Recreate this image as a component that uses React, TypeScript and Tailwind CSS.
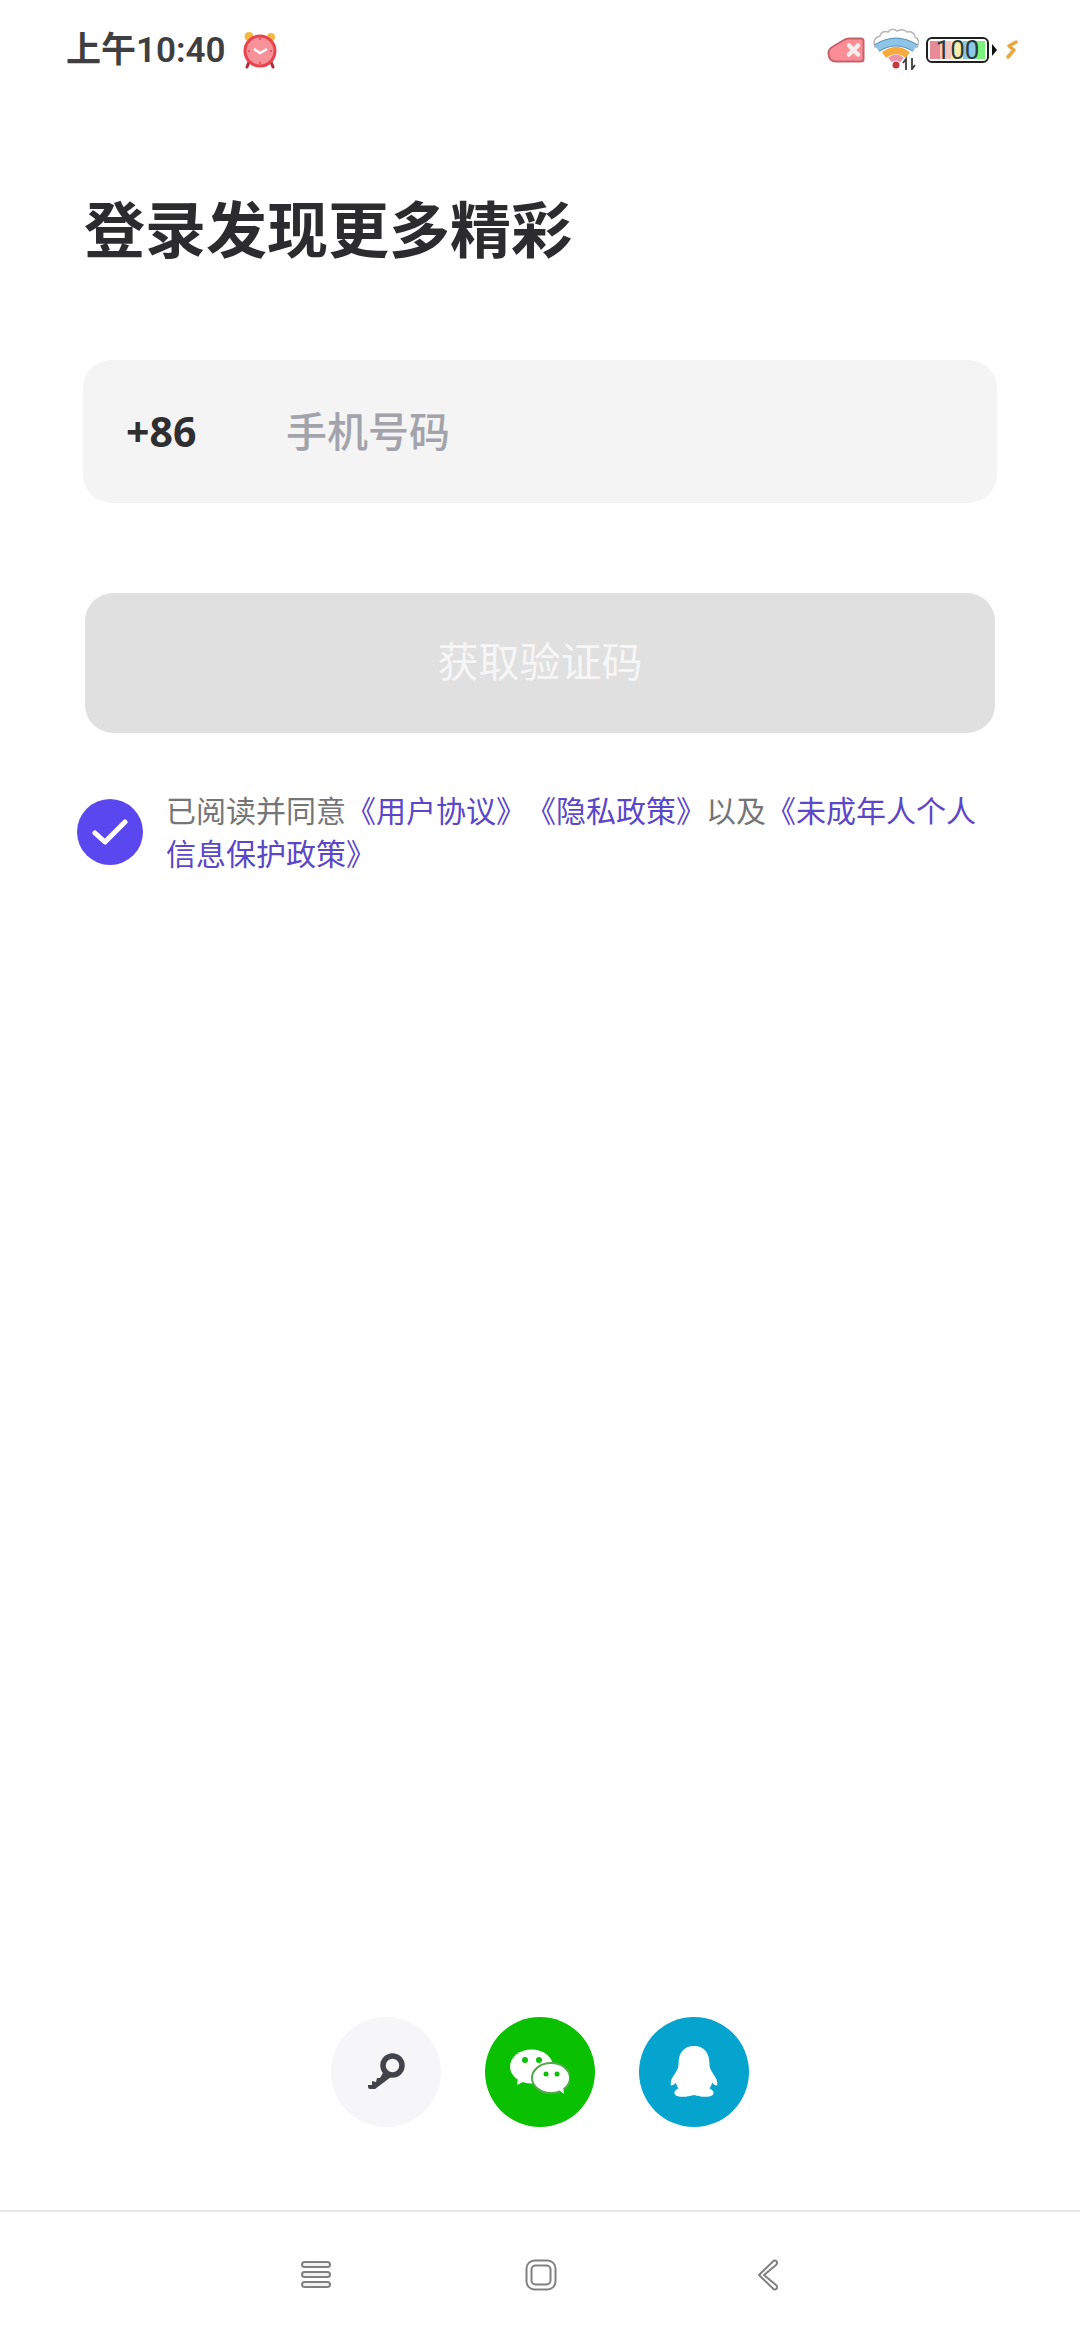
const CJK = "font-['Roboto','Noto_Sans_CJK_SC',sans-serif]";

const AlarmIcon = () => (
  <svg width="34" height="38" viewBox="0 0 34 38">
    <circle cx="6" cy="5.500" r="4.500" fill="#f5b942" />
    <circle cx="28" cy="6" r="4" fill="#f5b942" />
    <path d="M6 31 L4 36 M28 31 L30 36" stroke="#b3283a" strokeWidth="3" strokeLinecap="round" />
    <circle cx="17" cy="20" r="15" fill="#f79298" stroke="#e8444f" strokeWidth="3" />
    <path d="M11 18 L17 22 L24 18" fill="none" stroke="#fff" strokeWidth="2.500" />
    <path d="M17 7v2M17 31v2M5 20h2M27 20h2" stroke="#e8444f" strokeWidth="1.500" />
  </svg>
);

const SimIcon = () => (
  <svg width="38" height="26" viewBox="0 0 38 26">
    <path d="M1.500 16 Q1.500 12 6 9.500 L17 3 Q19 1.500 22 1.500 L34 1.500 Q36.500 1.500 36.500 4 L36.500 22 Q36.500 24.500 34 24.500 L9 24.500 Q1.500 24.500 1.500 16 Z" fill="#fb8d96" stroke="#c4636c" strokeWidth="2" />
    <path d="M22 8.500 L31 17.500 M31 8.500 L22 17.500" stroke="#f6eded" strokeWidth="4.500" strokeLinecap="round" />
  </svg>
);

const WifiIcon = () => (
  <svg width="46" height="42" viewBox="0 0 46 42">
    <path d="M2 19 Q-1 10 7 8 Q9 2 15 4 Q19 -1 24 3 Q30 0 34 4 Q41 3 42 9 Q48 12 44 19 L23 12 Z" fill="#fff" stroke="#b5b5b8" strokeWidth="1.500" />
    <path d="M4 20 Q23 8 42 20" fill="none" stroke="#5d93b8" strokeWidth="9" />
    <path d="M4 20 Q23 8 42 20" fill="none" stroke="#8cc5e8" strokeWidth="7" />
    <path d="M11 27 Q23 18 35 27" fill="none" stroke="#f7a93b" strokeWidth="7" />
    <path d="M17 32 Q23 27 29 32" fill="none" stroke="#ee93a8" strokeWidth="6" />
    <circle cx="23" cy="37" r="3.500" fill="#c23a3f" />
    <path d="M33 42 V31 L30 35 M39 30 V41 L42 37" fill="none" stroke="#3d3d40" strokeWidth="1.800" />
  </svg>
);

const Battery = () => (
  <div className="relative flex h-[26px] w-[63px] rounded-[6px] border-2 border-[#1f1f1f] bg-white p-[2px]">
    <div className="h-full w-[10px] bg-[#e58c98]" />
    <div className="h-full w-[11px] bg-[#f9c5b9]" />
    <div className="h-full w-[12px] bg-[#f8ecae]" />
    <div className="h-full w-[12px] bg-[#8cc9e6]" />
    <div className="h-full w-[10px] bg-[#7cf47c]" />
    <span className="absolute -inset-[2px] flex items-center justify-center font-['Roboto',sans-serif] text-[26px] leading-none text-[#2c3a3a]">100</span>
  </div>
);

const BoltIcon = () => (
  <svg width="13" height="20" viewBox="0 0 13 20" fill="none" stroke="#e8a83f" strokeWidth="3.500" strokeLinecap="round" strokeLinejoin="round">
    <path d="M11 2 L4 6 L9 10 L3 17" />
  </svg>
);

const KeyIcon = () => (
  <svg width="38" height="38" viewBox="0 0 38 38">
    <circle cx="25.500" cy="12.500" r="9.500" fill="none" stroke="#43434b" strokeWidth="5.500" />
    <path d="M1 32 L5 32 L5 28 L9 29 L10 25 L13 25 L17 18 L24 24 L8 36 L3 36 Q1 36 1 34 Z" fill="#43434b" />
  </svg>
);

const WechatIcon = () => (
  <svg width="60" height="46" viewBox="0 0 60 46">
    <ellipse cx="21.500" cy="17.500" rx="21.500" ry="17" fill="#fff" />
    <path d="M8 29 L7 36 L17 31 Z" fill="#fff" />
    <circle cx="15" cy="11" r="3" fill="#09c100" />
    <circle cx="29" cy="11" r="3" fill="#09c100" />
    <ellipse cx="41" cy="29" rx="19" ry="15" fill="#fff" stroke="#55a850" strokeWidth="2" />
    <path d="M48 40 L54 45 L53 38 Z" fill="#fff" />
    <circle cx="36" cy="25" r="2.500" fill="#09c100" />
    <circle cx="47" cy="25" r="2.500" fill="#09c100" />
  </svg>
);

const QQIcon = () => (
  <svg width="50" height="52" viewBox="0 0 50 54">
    <path d="M25 0 C14 0 9 8 9 18 C9 22 8 25 5 29 C2 33 0 37 1 41 C3 41 5 40 6 38 C7 41 8 43 9 44 C5 46 4 48 5 50 C7 53 15 54 25 51 C35 54 43 53 45 50 C46 48 45 46 41 44 C42 43 43 41 44 38 C45 40 47 41 49 41 C50 37 48 33 45 29 C42 25 41 22 41 18 C41 8 36 0 25 0 Z" fill="#fff" />
  </svg>
);

const NavMenu = () => (
  <svg width="32" height="30" viewBox="0 0 32 30" fill="#f2f2f2" stroke="#808080" strokeWidth="2">
    <rect x="2" y="2" width="28" height="5" rx="2.500" />
    <rect x="2" y="12" width="28" height="5" rx="2.500" />
    <rect x="2" y="22" width="28" height="5" rx="2.500" />
  </svg>
);

const NavHome = () => (
  <svg width="32" height="32" viewBox="0 0 32 32" fill="none" stroke="#808080" strokeWidth="2">
    <rect x="1.500" y="1.500" width="29" height="29" rx="8" />
    <rect x="6.500" y="6.500" width="19" height="19" rx="4" />
  </svg>
);

const NavBack = () => (
  <svg width="22" height="32" viewBox="0 0 22 32" fill="none" stroke="#808080" strokeWidth="2" strokeLinejoin="round">
    <path d="M17 1.500 Q19 1 20 3 Q20.500 4.500 19 6 L7 16 L19 26 Q20.500 27.500 20 29 Q19 31 17 30.500 L2 16 Z" />
  </svg>
);

const App = () => {
  return (
    <div className={`flex h-[2340px] w-[1080px] flex-col bg-white ${CJK}`}>
      {/* status bar */}
      <div className="flex h-[100px] items-center justify-between pl-[66px] pr-[62px]">
        <div className="flex items-center gap-[17px]">
          <span className="text-[35px] font-semibold leading-none text-[#3f3f41]">上午10:40</span>
          <AlarmIcon />
        </div>
        <div className="flex items-center">
          <SimIcon />
          <div className="ml-[8px] mb-[6px] mt-[4px]"><WifiIcon /></div>
          <div className="ml-[7px]"><Battery /></div>
          <div className="ml-[3px] h-0 w-0 border-y-[6px] border-l-[5px] border-y-transparent border-l-[#111]" />
          <div className="ml-[8px]"><BoltIcon /></div>
        </div>
      </div>

      {/* form */}
      <div className="flex flex-col px-[84px]">
        <h1 className="mt-[97px] text-[61px] font-bold leading-[70px] text-[#2c2c2e]">登录发现更多精彩</h1>
        <div className="mt-[93px] -mx-px flex h-[143px] items-center rounded-[28px] bg-[#f4f4f5] pl-[43px]">
          <span className="w-[160px] font-['Open_Sans',sans-serif] text-[41px] font-bold text-[#2f2f31]">+86</span>
          <span className="pt-[4px] text-[41px] font-medium text-[#a3a3ab]">手机号码</span>
        </div>
        <div className="mt-[90px] mx-px flex h-[140px] items-center justify-center rounded-[28px] bg-[#e0e0e0] pt-[2px] text-[41px] text-[#f6f6f6]">
          获取验证码
        </div>
      </div>

      {/* agreement */}
      <div className="mt-[57px] flex items-center pl-[77px] pr-[84px]">
        <div className="mb-[2px] flex h-[66px] w-[66px] shrink-0 items-center justify-center rounded-full bg-[#5b47f0]">
          <svg width="36" height="28" viewBox="0 0 36 28" fill="none" stroke="#fff" strokeWidth="5" strokeLinecap="round" strokeLinejoin="round">
            <path d="M3 15 L13 24 L33 4" />
          </svg>
        </div>
        <p className="ml-[23px] text-[30px] leading-[43px] text-[#757575] [text-spacing-trim:space-all]">
          已阅读并同意
          <span className="text-[#5a48c8]">《用户协议》《隐私政策》</span>
          以及
          <span className="text-[#5a48c8]">《未成年人个人信息保护政策》</span>
        </p>
      </div>

      {/* other login options */}
      <div className="mt-auto flex justify-center gap-[44px] pb-[83px]">
        <div className="flex h-[110px] w-[110px] items-center justify-center rounded-full bg-[#f6f6f9]"><KeyIcon /></div>
        <div className="flex h-[110px] w-[110px] items-center justify-center rounded-full bg-[#09c100]"><WechatIcon /></div>
        <div className="flex h-[110px] w-[110px] items-center justify-center rounded-full bg-[#05a4cf]"><QQIcon /></div>
      </div>

      {/* navigation bar */}
      <div className="flex h-[130px] items-start border-t-2 border-[#e6e6e6] pl-[300px] pt-[47px]">
        <div className="flex items-center">
          <NavMenu />
          <div className="ml-[193px]"><NavHome /></div>
          <div className="ml-[200px]"><NavBack /></div>
        </div>
      </div>
    </div>
  );
};

export default App;
